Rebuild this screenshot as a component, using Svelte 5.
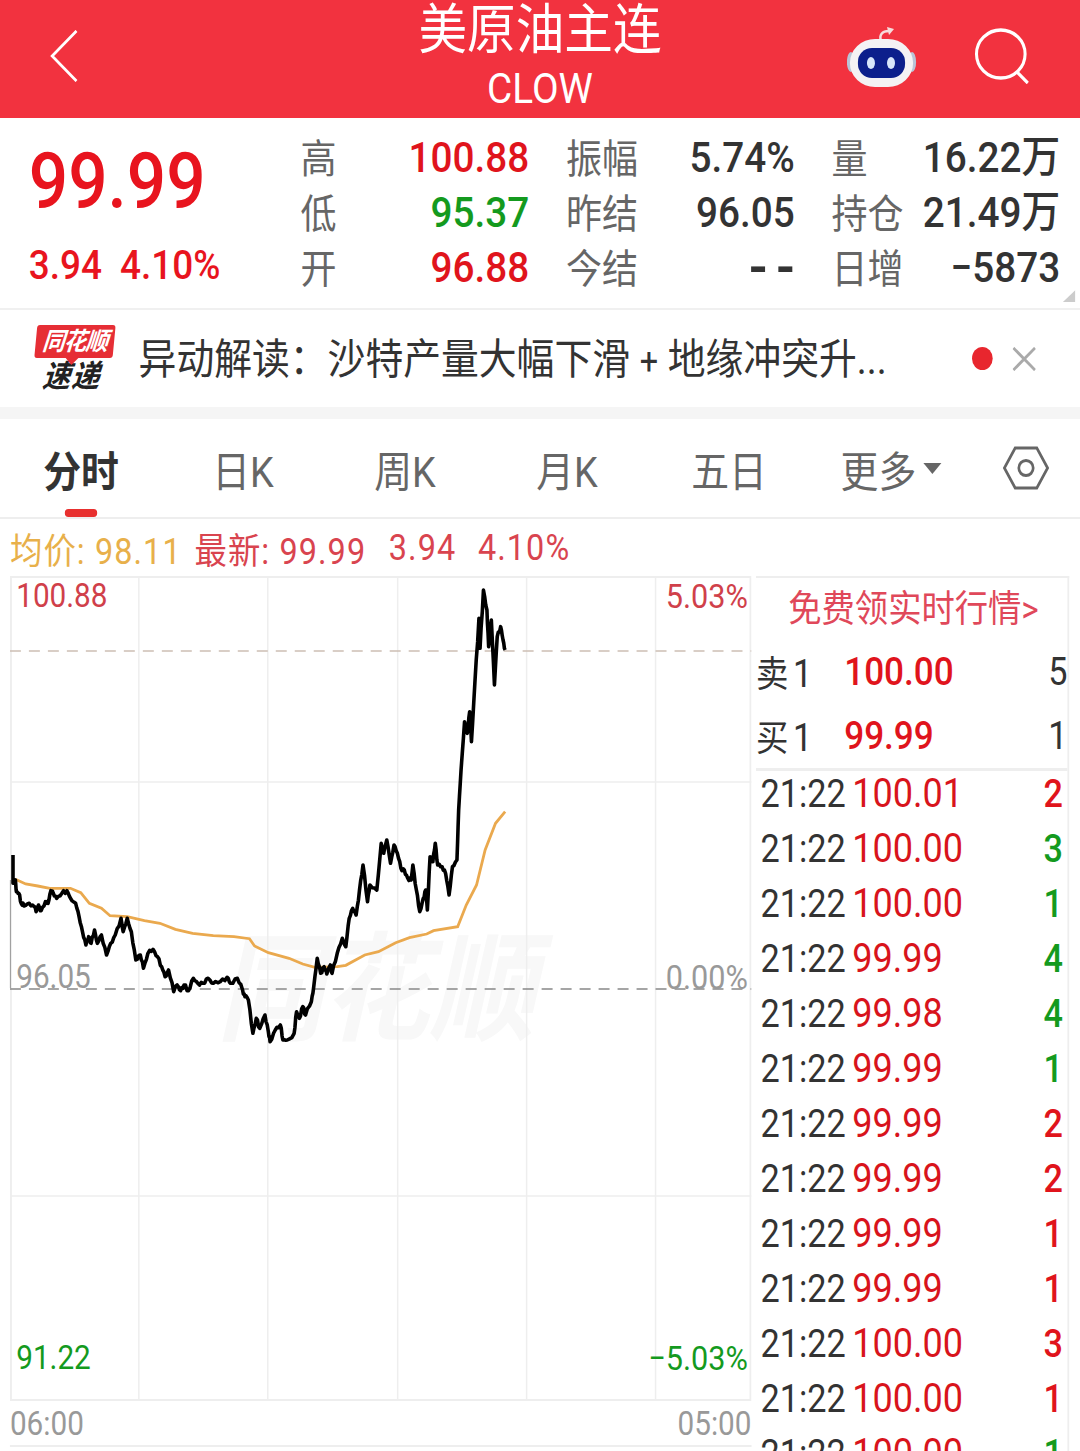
<script>
  // the reference is stretched vertically, so the page is laid out 1200 wide and squeezed to 1080
  const stats = [
    [['高', '100.88', 'up'], ['低', '95.37', 'down'], ['开', '96.88', 'up']],
    [['振幅', '5.74%', ''], ['昨结', '96.05', ''], ['今结', '--', 'dashes']],
    [['量', '16.22万', ''], ['持仓', '21.49万', ''], ['日增', '−5873', '']]
  ];

  const tabs = ['分时', '日K', '周K', '月K', '五日', '更多'];

  const trades = [
    ['100.01', 2, 'up'], ['100.00', 3, 'down'], ['100.00', 1, 'down'], ['99.99', 4, 'down'],
    ['99.98', 4, 'down'], ['99.99', 1, 'down'], ['99.99', 2, 'up'], ['99.99', 2, 'up'],
    ['99.99', 1, 'up'], ['99.99', 1, 'up'], ['100.00', 3, 'up'], ['100.00', 1, 'up'],
    ['100.00', 1, 'down']
  ];

  // traced from the crop of the chart: x / 2.904, 570 + y / 3
  const priceRaw = [38,855,38,940,45,930,48,965,55,970,62,1000,70,1008,85,1000,100,1010,105,1025,112,1005,120,1022,132,995,140,1000,148,962,155,970,165,985,180,970,195,962,205,985,220,1000,230,1040,240,1085,250,1125,258,1100,265,1120,275,1080,283,1120,295,1095,310,1155,322,1120,335,1095,352,1045,358,1085,370,1045,382,1085,395,1170,408,1155,417,1195,430,1150,445,1138,458,1160,470,1190,480,1220,490,1200,505,1265,515,1245,525,1262,535,1245,548,1262,562,1225,575,1240,590,1240,605,1225,620,1240,640,1235,660,1222,670,1240,690,1225,705,1260,712,1280,722,1290,735,1390,745,1345,755,1375,770,1335,780,1385,785,1415,800,1380,815,1365,822,1410,835,1410,855,1390,862,1325,870,1345,880,1310,888,1335,905,1295,912,1250,922,1165,932,1210,942,1190,950,1212,960,1185,965,1210,980,1150,995,1105,1005,1130,1015,1045,1025,1015,1035,1035,1045,960,1055,885,1068,995,1075,945,1095,960,1108,820,1115,850,1124,810,1135,880,1145,825,1155,850,1165,895,1175,900,1185,925,1195,930,1200,885,1210,960,1220,1025,1230,985,1237,960,1242,1020,1250,860,1258,875,1265,820,1272,885,1285,890,1295,910,1305,975,1315,890,1328,870,1333,720,1340,600,1350,455,1358,490,1365,425,1370,515,1380,340,1392,145,1395,235,1405,60,1415,120,1420,230,1428,150,1437,345,1445,200,1455,170,1462,210,1468,240];
  const avgRaw = [45,928,75,942,110,948,145,955,205,955,235,968,260,1000,295,1015,320,1037,370,1040,420,1052,465,1060,510,1078,560,1090,620,1097,680,1100,725,1106,740,1128,780,1148,840,1165,880,1182,915,1192,980,1190,1005,1186,1060,1155,1100,1145,1150,1118,1190,1103,1240,1092,1260,1082,1330,1070,1355,1005,1385,945,1410,840,1440,760,1468,725];

  function toPoints(raw, jitter) {
    const out = [];
    for (let i = 0; i < raw.length - 2; i += 2) {
      const x0 = raw[i] / 2.904, y0 = 570 + raw[i + 1] / 3;
      const x1 = raw[i + 2] / 2.904, y1 = 570 + raw[i + 3] / 3;
      const steps = jitter ? 3 : 1;
      for (let s = 0; s < steps; s++) {
        const t = s / steps;
        const noise = s && jitter ? (Math.sin(i * 12.9898 + s * 78.233) * 1000 % 1) * jitter : 0;
        out.push(`${(x0 + (x1 - x0) * t).toFixed(1)},${(y0 + (y1 - y0) * t + noise).toFixed(1)}`);
      }
    }
    out.push(`${(raw[raw.length - 2] / 2.904).toFixed(1)},${(570 + raw[raw.length - 1] / 3).toFixed(1)}`);
    return out.join(' ');
  }

  const pricePoints = toPoints(priceRaw, 2);
  const avgPoints = toPoints(avgRaw, 0);
  const gridX = [139, 268, 398, 527, 656];
</script>

<div class="viewport">
  <div class="page">
    <header class="topbar">
      <div class="topbar-left">
        <svg class="back" viewBox="0 0 32 52" fill="none" stroke="#fff" stroke-width="3"><path d="M30 1 3 26l27 25" /></svg>
      </div>
      <div class="title">
        <div class="name">美原油主连</div>
        <div class="code">CLOW</div>
      </div>
      <div class="topbar-right">
        <svg class="robot" viewBox="848 24 70 64" preserveAspectRatio="none">
          <path d="M882 40c-2-6 1-10 8-10" fill="none" stroke="#f6dcdc" stroke-width="2.5" />
          <path d="m888 26 7 2-5 6z" fill="#f6dcdc" />
          <ellipse cx="852" cy="61" rx="4" ry="10" fill="#b9c3d6" />
          <ellipse cx="913" cy="61" rx="4" ry="10" fill="#b9c3d6" />
          <rect x="851" y="38" width="63" height="48" rx="25" fill="#f4f2f4" />
          <rect x="859" y="47" width="47" height="30" rx="14" fill="#0c1f8c" />
          <ellipse cx="872" cy="62" rx="4" ry="6" fill="#d8e6fb" />
          <ellipse cx="892" cy="62" rx="4" ry="6" fill="#d8e6fb" />
        </svg>
        <svg class="search" viewBox="0 0 64 56" fill="none" stroke="#fff" stroke-width="3.4"><ellipse cx="31" cy="26" rx="27" ry="24" /><path d="m49 44 12 11" /></svg>
      </div>
    </header>

    <section class="quote">
      <div class="last">
        <div class="last-price">99.99</div>
        <div class="last-change"><span>3.94</span><span>4.10%</span></div>
      </div>
      <div class="stats">
        {#each stats as col}
          <div class="stat-col">
            {#each col as [label, value, dir]}
              <div class="stat">
                <span class="stat-label">{label}</span>
                {#if value.endsWith('万')}
                  <span class="stat-value">{value.slice(0, -1)}<span class="unit">万</span></span>
                {:else}
                  <span class="stat-value {dir}">{value}</span>
                {/if}
              </div>
            {/each}
          </div>
        {/each}
      </div>
      <span class="corner"></span>
    </section>

    <section class="news">
      <div class="logo">
        <div class="logo-top">同花顺</div>
        <div class="logo-bottom">速递</div>
      </div>
      <div class="news-text">异动解读：沙特产量大幅下滑<span class="plus">+</span>地缘冲突升...</div>
      <span class="dot"></span>
      <svg class="close" viewBox="0 0 26 24" fill="none" stroke="#aaa" stroke-width="3"><path d="m1 1 24 22M25 1 1 23" /></svg>
    </section>

    <nav class="tabs">
      {#each tabs as tab, i}
        <div class="tab" class:active={i === 0}>
          {tab}{#if tab === '更多'}<span class="caret"></span>{/if}
        </div>
      {/each}
      <div class="tab-settings">
        <svg viewBox="0 0 52 44" width="52" height="44" fill="none" stroke="#666" stroke-width="3">
          <path d="M14 2h24l12 20-12 20H14L2 22z" /><ellipse cx="26" cy="22" rx="8" ry="7.5" />
        </svg>
      </div>
    </nav>

    <div class="legend">
      <span class="avg">均价: 98.11</span>
      <span class="latest">最新: 99.99</span>
      <span class="latest chg">3.94</span>
      <span class="latest pct">4.10%</span>
    </div>

    <div class="main">
      <div class="chart-col">
        <div class="chart">
          <span class="watermark">同花顺</span>
          <svg viewBox="10 576 742 825" width="824" height="825" preserveAspectRatio="none">
            <rect x="11" y="577" width="740" height="823" fill="none" stroke="#eee" stroke-width="2" />
            {#each gridX as x}
              <line x1={x} x2={x} y1="576" y2="1401" stroke="#eee" stroke-width="1.5" />
            {/each}
            <line x1="10" x2="752" y1="782" y2="782" stroke="#eee" stroke-width="1.5" />
            <line x1="10" x2="752" y1="1196" y2="1196" stroke="#eee" stroke-width="1.5" />
            <line x1="10" x2="752" y1="651" y2="651" stroke="#cdbfb4" stroke-width="1.5" stroke-dasharray="11 8" />
            <line x1="10" x2="752" y1="989" y2="989" stroke="#888" stroke-width="1.5" stroke-dasharray="11 8" />
            <line x1="10" x2="10" y1="880" y2="988" stroke="#777" stroke-width="1.5" />
            <polyline points={avgPoints} fill="none" stroke="#eaa94e" stroke-width="2.8" />
            <polyline points={pricePoints} fill="none" stroke="#000" stroke-width="3.6" stroke-linejoin="round" />
          </svg>
          <span class="axis top left up-soft">100.88</span>
          <span class="axis top right up-soft">5.03%</span>
          <span class="axis mid left">96.05</span>
          <span class="axis mid right">0.00%</span>
          <span class="axis low left down">91.22</span>
          <span class="axis low right down">−5.03%</span>
        </div>
        <div class="times"><span>06:00</span><span>05:00</span></div>
        <div class="next-chart"></div>
      </div>

      <aside class="side">
        <div class="promo">免费领实时行情&gt;</div>
        <div class="book">
          <div class="book-row">
            <span class="book-label">卖<i>1</i></span>
            <span class="book-price">100.00</span>
            <span class="book-vol">5</span>
          </div>
          <div class="book-row">
            <span class="book-label">买<i>1</i></span>
            <span class="book-price">99.99</span>
            <span class="book-vol">1</span>
          </div>
        </div>
        <div class="trades">
          {#each trades as [price, vol, dir]}
            <div class="trade">
              <span class="trade-time">21:22</span>
              <span class="trade-price">{price}</span>
              <span class="trade-vol {dir}">{vol}</span>
            </div>
          {/each}
        </div>
      </aside>
    </div>
  </div>
</div>

<style>
  :global(body) {
    margin: 0;
    background: #fff;
  }

  .viewport {
    width: 1080px;
    height: 1451px;
    overflow: hidden;
  }

  .page {
    width: 1200px;
    transform: scaleX(0.9);
    transform-origin: 0 0;
    font-family: Roboto, "Noto Sans CJK SC", sans-serif;
    color: #333;
  }

  .up { color: #e0141c; }
  .down { color: #149a1e; }

  .topbar {
    height: 118px;
    background: #f2323f;
    display: grid;
    grid-template-columns: 1fr auto 1fr;
    align-items: center;
  }

  .topbar-left { padding-left: 55px; display: flex; align-items: center; padding-bottom: 6px; }
  .back { width: 32px; height: 52px; }

  .title { text-align: center; color: #fff; align-self: start; padding-top: 4px; }
  .name { font-size: 54px; line-height: 54px; }
  .code { font-size: 43px; line-height: 46px; margin-top: 7px; }

  .topbar-right {
    display: flex;
    justify-content: flex-end;
    align-items: center;
    gap: 62px;
    padding-right: 55px;
    padding-bottom: 6px;
  }
  .robot { width: 78px; height: 64px; margin-top: 2px; }
  .search { width: 64px; height: 56px; }

  .quote {
    position: relative;
    height: 192px;
    display: flex;
    border-bottom: 2px solid #f0f0f0;
    box-sizing: border-box;
  }

  .last { width: 334px; padding-left: 32px; box-sizing: border-box; color: #e8141e; }
  .last-price { font-size: 77px; line-height: 82px; font-weight: 500; margin-top: 23px; }
  .last-change { display: flex; gap: 20px; font-size: 41px; line-height: 44px; margin-top: 20px; font-weight: 500; }

  .stats { display: flex; gap: 41px; }
  .stat-col { width: 254px; }
  .stat {
    height: 55px;
    display: flex;
    justify-content: space-between;
    align-items: center;
  }
  .stat:first-child { margin-top: 11px; }
  .stat-label { font-size: 40px; color: #666; margin-bottom: 2px; }
  .stat-value { font-size: 43px; font-weight: 500; }
  .stat-value.dashes { font-size: 60px; line-height: 38px; letter-spacing: 10px; margin-right: -10px; }
  .unit { line-height: 0; }

  .corner {
    position: absolute;
    right: 5px;
    bottom: 6px;
    width: 14px;
    height: 12px;
    background: #ccc;
    clip-path: polygon(100% 0, 100% 100%, 0 100%);
  }

  .news {
    height: 97px;
    display: flex;
    align-items: center;
    box-sizing: border-box;
    padding: 0 49px 0 38px;
  }

  .logo { width: 96px; text-align: center; transform: skewX(-6deg); }
  .logo-top {
    position: relative;
    width: 87px;
    height: 33px;
    margin-bottom: 4px;
    background: #e62e35;
    border-radius: 3px;
    color: #fff;
    font-size: 25px;
    line-height: 33px;
    font-weight: 700;
    font-style: italic;
    letter-spacing: -1px;
  }
  .logo-top::after {
    content: "";
    position: absolute;
    left: 37px;
    bottom: -5px;
    width: 10px;
    height: 10px;
    background: #e62e35;
    transform: rotate(45deg);
  }
  .logo-bottom {
    width: 87px;
    font-size: 31px;
    line-height: 30px;
    font-weight: 700;
    font-style: italic;
    color: #222;
    letter-spacing: 1px;
  }

  .news-text { margin: 4px 0 0 20px; font-size: 42px; line-height: 50px; white-space: nowrap; color: #333; }
  .plus { display: inline-block; width: 42px; text-align: center; font-size: 36px; }
  .dot { width: 23px; height: 23px; border-radius: 50%; background: #e8262e; margin-left: auto; }
  .close { width: 26px; height: 24px; margin-left: 22px; }

  .tabs {
    display: flex;
    height: 98px;
    align-items: center;
    border-top: 12px solid #f5f5f5;
    border-bottom: 2px solid #eee;
  }

  .tab {
    position: relative;
    width: 180px;
    height: 98px;
    display: flex;
    align-items: center;
    justify-content: center;
    font-size: 42px;
    color: #666;
  }
  .tab.active { color: #333; font-weight: 700; }
  .tab.active::after {
    content: "";
    position: absolute;
    left: 72px;
    bottom: 0;
    width: 36px;
    height: 8px;
    border-radius: 4px;
    background: #e8302f;
  }
  .caret {
    width: 0;
    height: 0;
    margin-left: 8px;
    border-left: 10px solid transparent;
    border-right: 10px solid transparent;
    border-top: 11px solid #666;
  }
  .tab-settings { width: 120px; display: flex; justify-content: center; }

  .legend {
    height: 57px;
    display: flex;
    align-items: center;
    padding-left: 11px;
    font-size: 36px;
    letter-spacing: 1.2px;
    white-space: nowrap;
  }
  .avg { color: #e8b04a; width: 205px; }
  .latest { color: #d9444f; }
  .latest:not(.chg):not(.pct) { width: 216px; }
  .chg { width: 99px; }

  .main { display: flex; margin-left: 11px; gap: 5px; }
  .chart-col { width: 824px; }
  .chart { position: relative; height: 825px; }
  .chart svg { position: relative; display: block; }

  .watermark {
    position: absolute;
    left: 230px;
    top: 345px;
    font-size: 118px;
    line-height: 140px;
    font-weight: 700;
    font-style: italic;
    color: #f8f8f8;
  }

  .axis { position: absolute; font-size: 33px; line-height: 40px; color: #999; }
  .axis.left { left: 7px; }
  .axis.right { right: 4px; font-size: 34px; }
  .axis.top { top: 0; }
  .axis.mid { top: 381px; }
  .axis.low { top: 762px; }
  .up-soft { color: #d0404a; }
  .axis.down { color: #149a1e; }

  .times {
    height: 44px;
    display: flex;
    justify-content: space-between;
    align-items: center;
    font-size: 33px;
    color: #999;
  }
  .next-chart { border-top: 2px solid #eee; height: 10px; }

  .side {
    width: 348px;
    border-top: 2px solid #eee;
    border-right: 2px solid #eee;
    box-sizing: border-box;
  }

  .promo {
    height: 62px;
    text-align: center;
    font-size: 37px;
    line-height: 64px;
    color: #e0485a;
    padding-left: 4px;
    white-space: nowrap;
  }

  .book { border-bottom: 3px solid #eee; }
  .book-row {
    height: 64px;
    display: flex;
    align-items: center;
    font-size: 38px;
  }
  .book-label { width: 98px; font-size: 36px; white-space: nowrap; margin-bottom: 3px; }
  .book-label i { font-style: normal; font-size: 38px; margin-left: 5px; }
  .book-price { flex: 1; color: #e0141c; font-weight: 500; font-size: 39px; }
  .book-vol { color: #333; }

  .trades { margin-top: -5px; padding-left: 5px; padding-right: 5px; }
  .trade {
    height: 55px;
    display: flex;
    align-items: center;
    font-size: 38px;
  }
  .trade-time { width: 102px; }
  .trade-price { flex: 1; color: #d8141c; font-size: 40px; }
  .trade-vol { font-weight: 500; }
</style>
